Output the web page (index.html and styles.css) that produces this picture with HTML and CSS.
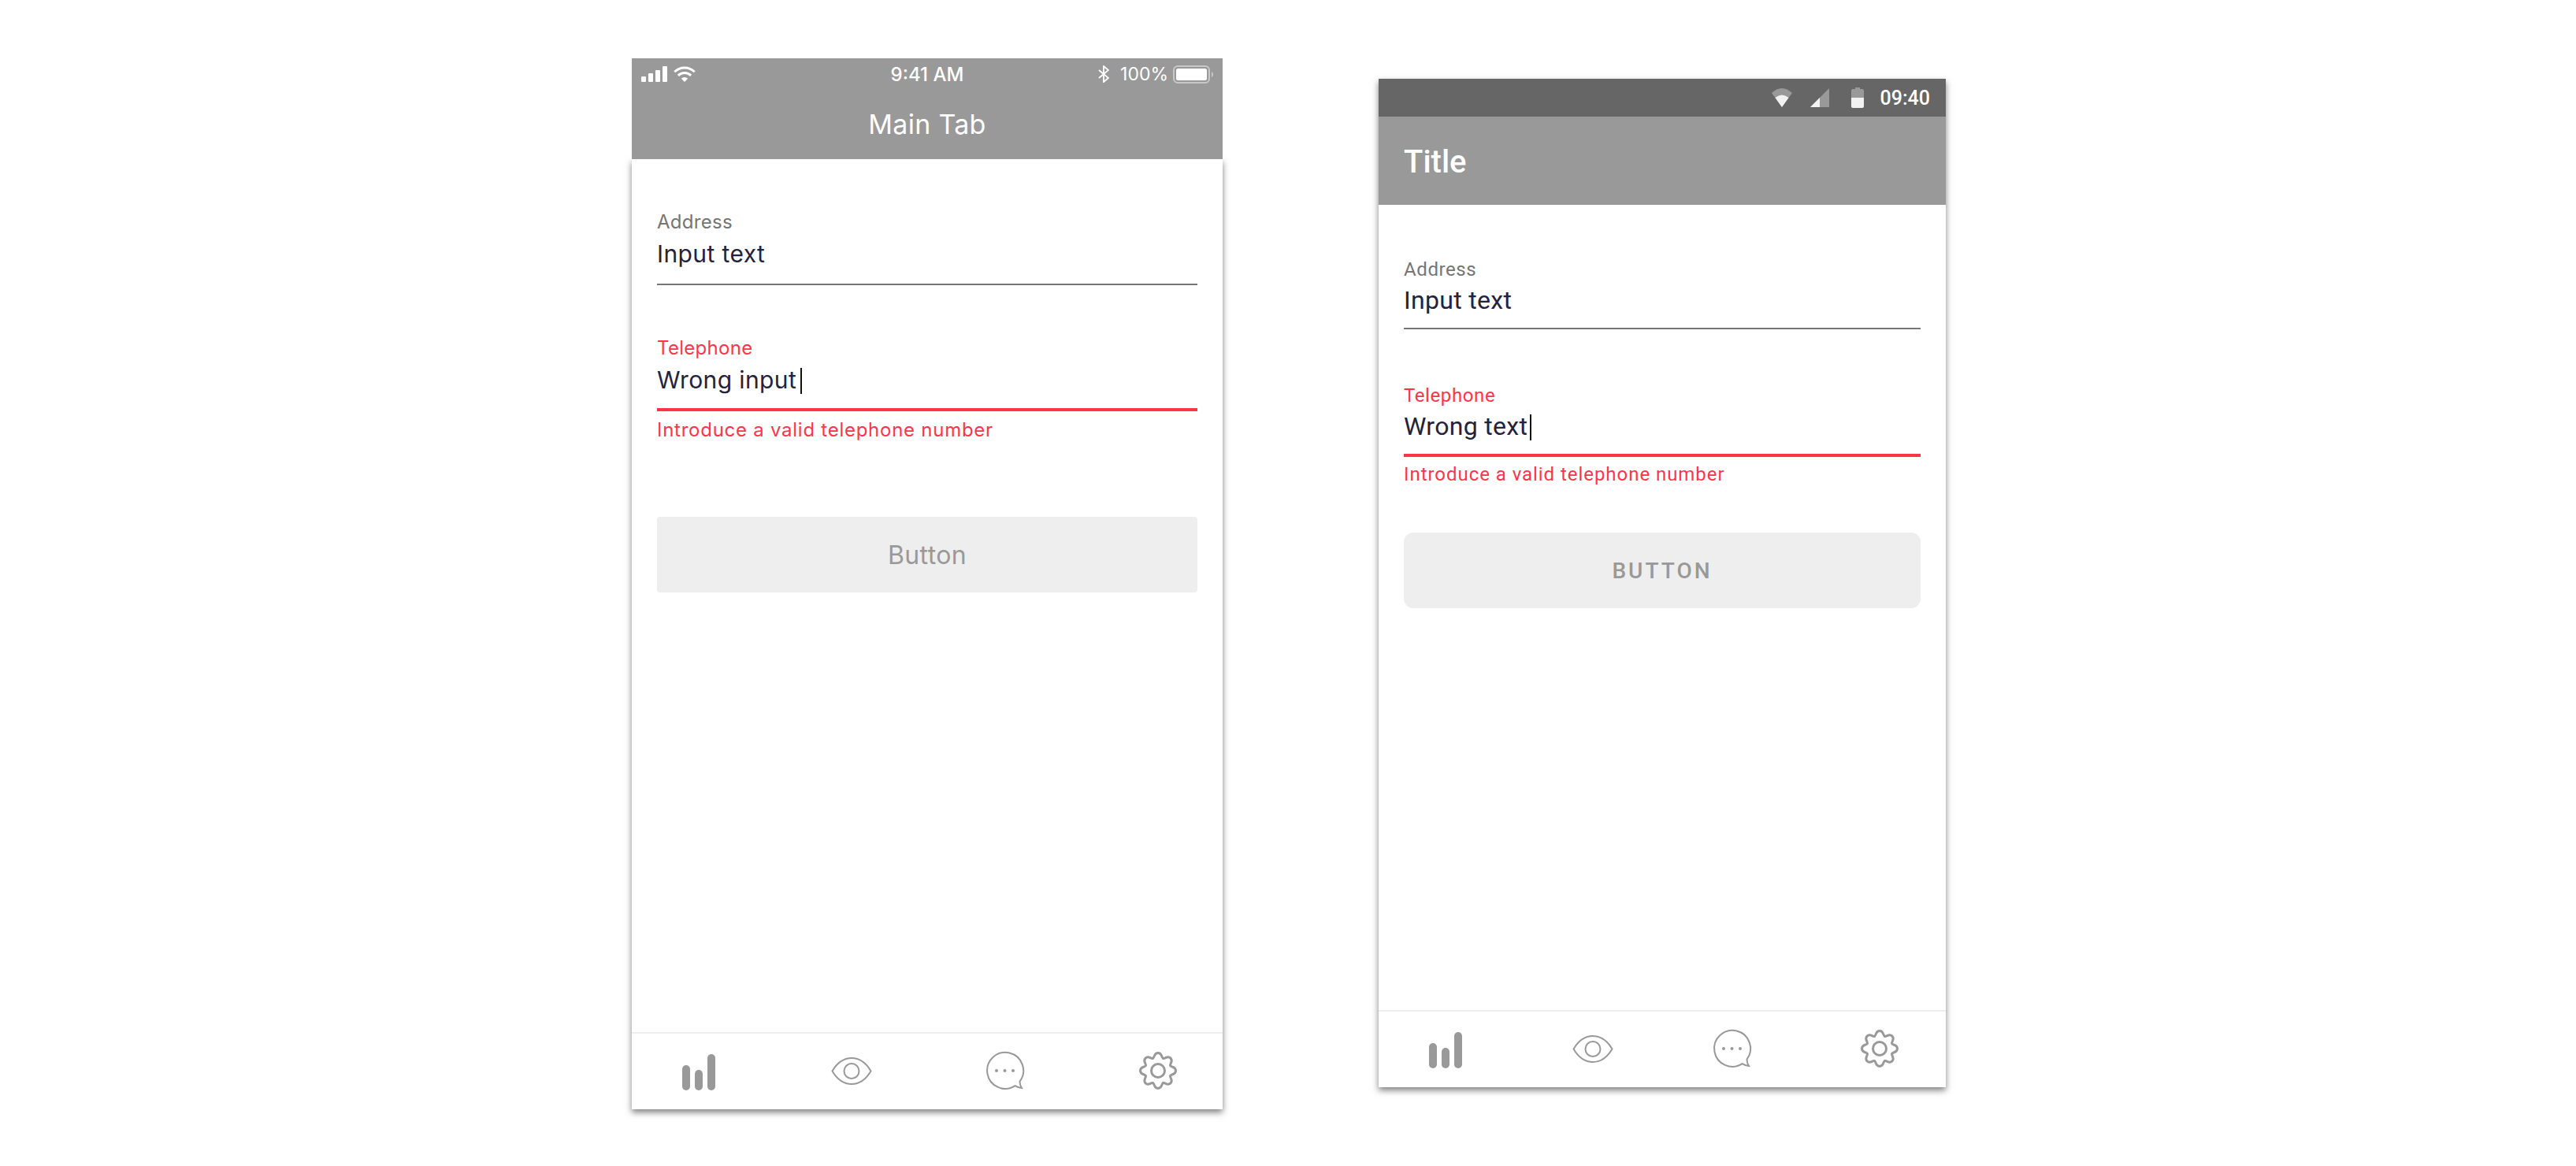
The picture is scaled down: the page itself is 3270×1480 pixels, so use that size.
FILE: index.html
```html
<!DOCTYPE html>
<html>
<head>
	<meta charset="utf-8">
	<title>Form error states</title>
	<link rel="stylesheet" href="styles.css">
</head>
<body>

<svg class="defs" width="0" height="0">
	<symbol id="icon-bars" viewBox="0 0 60 60">
		<rect x="9" y="22" width="10" height="32" rx="5"/>
		<rect x="25" y="28" width="10" height="26" rx="5"/>
		<rect x="41" y="8" width="10" height="46" rx="5"/>
	</symbol>
	<symbol id="icon-eye" viewBox="0 0 60 60">
		<path class="line" d="M5.5 29.5C12 18.5 20 13 30 13S48 18.5 54.5 29.5C48 40.5 40 46 30 46S12 40.5 5.5 29.5Z"/>
		<circle class="line" cx="30" cy="29.5" r="9.5"/>
	</symbol>
	<symbol id="icon-chat" viewBox="0 0 60 60">
		<path class="line" d="M42.6 48.2A23 23 0 1 1 48.5 42.7Q48.5 47 51 51Q46 50.5 42.6 48.2Z"/>
		<circle cx="19" cy="29" r="2"/>
		<circle cx="29.5" cy="29" r="2"/>
		<circle cx="40" cy="29" r="2"/>
	</symbol>
	<path id="gear-tooth" class="line-thick" d="M23.5 13.3C26 12.3 24.5 6.5 30 6.5S34 12.3 36.5 13.3"/>
	<symbol id="icon-gear" viewBox="0 0 60 60">
		<use href="#gear-tooth"/>
		<use href="#gear-tooth" transform="rotate(45 30 29)"/>
		<use href="#gear-tooth" transform="rotate(90 30 29)"/>
		<use href="#gear-tooth" transform="rotate(135 30 29)"/>
		<use href="#gear-tooth" transform="rotate(180 30 29)"/>
		<use href="#gear-tooth" transform="rotate(225 30 29)"/>
		<use href="#gear-tooth" transform="rotate(270 30 29)"/>
		<use href="#gear-tooth" transform="rotate(315 30 29)"/>
		<circle class="line-thick" cx="30" cy="29" r="8.5"/>
	</symbol>
</svg>

<div class="page">

	<!-- ios -->
	<div class="phone ios">
		<div class="top">
			<div class="status">
				<div class="status-left">
					<svg width="33" height="20" viewBox="0 0 33 20" fill="#fff">
						<rect x="0" y="13" width="6" height="7" rx="1"/>
						<rect x="9" y="9" width="6" height="11" rx="1"/>
						<rect x="18" y="5" width="6" height="15" rx="1"/>
						<rect x="27" y="0" width="6" height="20" rx="1"/>
					</svg>
					<svg width="28" height="20" viewBox="0 0 28 20" fill="none" stroke="#fff" stroke-width="3">
						<path d="M1.3 7.3A18 18 0 0 1 26.7 7.3"/>
						<path d="M5.9 11.9A11.5 11.5 0 0 1 22.1 11.9"/>
						<path d="M14 20L9.8 15.8A6 6 0 0 1 18.2 15.8Z" fill="#fff" stroke="none"/>
					</svg>
				</div>
				<div class="clock">9:41 AM</div>
				<div class="status-right">
					<svg class="bt" width="14" height="22" viewBox="0 0 14 22" fill="none" stroke="#fff" stroke-width="1.8">
						<path d="M1 6L13 16L7 21V1L13 6L1 16"/>
					</svg>
					<span class="percent">100%</span>
					<svg width="51" height="23" viewBox="0 0 51 23">
						<rect x="1" y="1" width="45" height="21" rx="5" fill="none" stroke="#c8c8c8" stroke-width="2"/>
						<rect x="4" y="4" width="39" height="15" rx="2.5" fill="#fff"/>
						<path d="M49 8C50.2 8.5 51 10 51 11.5S50.2 14.5 49 15Z" fill="#c8c8c8"/>
					</svg>
				</div>
			</div>
			<div class="navbar">Main Tab</div>
		</div>
		<div class="sheet">
			<div class="form">
				<div class="field">
					<div class="label">Address</div>
					<div class="value">Input text</div>
				</div>
				<div class="field error">
					<div class="label">Telephone</div>
					<div class="value">Wrong input<span class="caret"></span></div>
					<div class="hint">Introduce a valid telephone number</div>
				</div>
				<div class="button">Button</div>
			</div>
			<div class="tabs">
				<svg class="tab"><use href="#icon-bars"/></svg>
				<svg class="tab"><use href="#icon-eye"/></svg>
				<svg class="tab"><use href="#icon-chat"/></svg>
				<svg class="tab"><use href="#icon-gear"/></svg>
			</div>
		</div>
	</div>

	<!-- android -->
	<div class="phone android">
		<div class="top">
			<div class="status">
				<svg width="26" height="24" viewBox="0 0 26 24">
					<path d="M13 24L0 6Q13 -6 26 6Z" fill="#999"/>
					<path d="M13 24L4.5 12Q13 5 21.5 12Z" fill="#f2f2f2"/>
				</svg>
				<svg class="signal" width="24" height="24" viewBox="0 0 24 24">
					<path d="M0 24L24 0V24Z" fill="#999"/>
					<path d="M0 24L12 12V24Z" fill="#f2f2f2"/>
				</svg>
				<svg class="battery" width="16" height="26" viewBox="0 0 16 26">
					<path d="M5 0H11V2H14Q16 2 16 4V13H0V4Q0 2 2 2H5Z" fill="#999"/>
					<path d="M0 13H16V24Q16 26 14 26H2Q0 26 0 24Z" fill="#f2f2f2"/>
				</svg>
				<span class="clock">09:40</span>
			</div>
			<div class="appbar">Title</div>
		</div>
		<div class="sheet">
			<div class="form">
				<div class="field">
					<div class="label">Address</div>
					<div class="value">Input text</div>
				</div>
				<div class="field error">
					<div class="label">Telephone</div>
					<div class="value">Wrong text<span class="caret"></span></div>
					<div class="hint">Introduce a valid telephone number</div>
				</div>
				<div class="button">BUTTON</div>
			</div>
			<div class="tabs">
				<svg class="tab"><use href="#icon-bars"/></svg>
				<svg class="tab"><use href="#icon-eye"/></svg>
				<svg class="tab"><use href="#icon-chat"/></svg>
				<svg class="tab"><use href="#icon-gear"/></svg>
			</div>
		</div>
	</div>

</div>

</body>
</html>
```

FILE: styles.css
```css
*{
	margin: 0;
	padding: 0;
	box-sizing: border-box;
}

body{
	background-color: #fff;
	height: 1480px;
	overflow: hidden;
}

.defs{
	position: absolute;
}

.page{
	display: flex;
	align-items: flex-start;
	gap: 198px;
	padding-left: 802px;
}

.phone{
	display: flex;
	flex-direction: column;
}

.sheet{
	flex: 1;
	display: flex;
	flex-direction: column;
	background-color: #fff;
}

.form{
	flex: 1;
	padding: 0 32px;
}

.top{
	position: relative;
	z-index: 1;
	background-color: #999;
	color: #fff;
}

.label{
	font-size: 24px;
	line-height: 30px;
	color: #757575;
}

.value{
	font-size: 32px;
	line-height: 40px;
	color: #24233b;
	border-bottom: 2px solid #757575;
}

.caret{
	display: inline-block;
	width: 2px;
	height: 33px;
	background-color: #111;
	vertical-align: -7px;
}

.error .label,
.error .hint{
	color: #fc3548;
}

.error .value{
	border-bottom: 4px solid #fc3548;
}

.hint{
	font-size: 24px;
	line-height: 30px;
}

.button{
	display: flex;
	align-items: center;
	justify-content: center;
	height: 96px;
	background-color: #eee;
	color: #999;
}

.tabs{
	display: grid;
	height: 98px;
	align-items: center;
	border-top: 2px solid #eee;
}

.tab{
	width: 60px;
	height: 60px;
	fill: #999;
}

.line{
	fill: none;
	stroke: #999;
	stroke-width: 2;
}

.line-thick{
	fill: none;
	stroke: #999;
	stroke-width: 3;
	stroke-linecap: round;
}

/* ios 750 x 1334 */
.ios{
	width: 750px;
	height: 1334px;
	margin-top: 74px;
	font-family: Inter, "Liberation Sans", sans-serif;
}

.ios .sheet{
	box-shadow: 0 4px 8px rgba(0, 0, 0, 0.5);
}

.ios .status{
	display: grid;
	grid-template-columns: 1fr auto 1fr;
	align-items: center;
	height: 40px;
	padding: 0 12px;
}

.status-left{
	display: flex;
	align-items: center;
	gap: 8px;
}

.status-right{
	display: flex;
	align-items: center;
	justify-content: flex-end;
}

.percent{
	font-size: 23px;
	margin-left: 14px;
	margin-right: 6px;
}

.ios .clock{
	font-size: 24px;
	font-weight: 500;
}

.navbar{
	height: 88px;
	font-size: 34px;
	line-height: 88px;
	text-align: center;
	letter-spacing: 0.3px;
}

.ios .field{
	padding-top: 65px;
}

.ios .label{
	margin-bottom: 5px;
	letter-spacing: 0.3px;
}

.ios .value{
	font-size: 30px;
	letter-spacing: 0.4px;
	padding-bottom: 18px;
}

.ios .caret{
	margin-left: 5px;
}

.ios .error .value{
	padding-bottom: 16px;
}

.ios .hint{
	margin-top: 9px;
	letter-spacing: 0.74px;
}

.ios .button{
	margin-top: 95px;
	border-radius: 4px;
	font-size: 32px;
	letter-spacing: 0.4px;
}

.ios .tabs{
	grid-template-columns: repeat(3, 194.33px) 60px;
	padding-left: 55px;
}

/* android 720 x 1280 */
.android{
	width: 720px;
	height: 1280px;
	margin-top: 100px;
	font-family: Roboto, "Liberation Sans", sans-serif;
	box-shadow: 0 4px 8px rgba(0, 0, 0, 0.5);
}

.android .status{
	display: flex;
	align-items: center;
	justify-content: flex-end;
	height: 48px;
	padding-right: 20px;
	background-color: #666;
}

.signal{
	margin-left: 23px;
}

.battery{
	margin-left: 28px;
}

.android .clock{
	margin-left: 21px;
	font-size: 25px;
	font-weight: 500;
}

.appbar{
	height: 112px;
	padding-top: 4px;
	padding-left: 32px;
	font-size: 40px;
	font-weight: 500;
	line-height: 108px;
}

.android .field{
	padding-top: 69px;
}

.android .form > .field:first-child{
	padding-top: 67px;
}

.android .label{
	margin-bottom: 4px;
	letter-spacing: 0.6px;
}

.android .value{
	letter-spacing: 0.3px;
	padding-bottom: 15px;
}

.android .caret{
	margin-left: 3px;
}

.android .hint{
	margin-top: 7px;
	letter-spacing: 0.95px;
}

.android .button{
	margin-top: 59px;
	border-radius: 12px;
	font-size: 28px;
	font-weight: 500;
	letter-spacing: 3px;
}

.android .tabs{
	grid-template-columns: 186.5px 177.5px 186.5px 60px;
	padding-left: 55px;
}
```
